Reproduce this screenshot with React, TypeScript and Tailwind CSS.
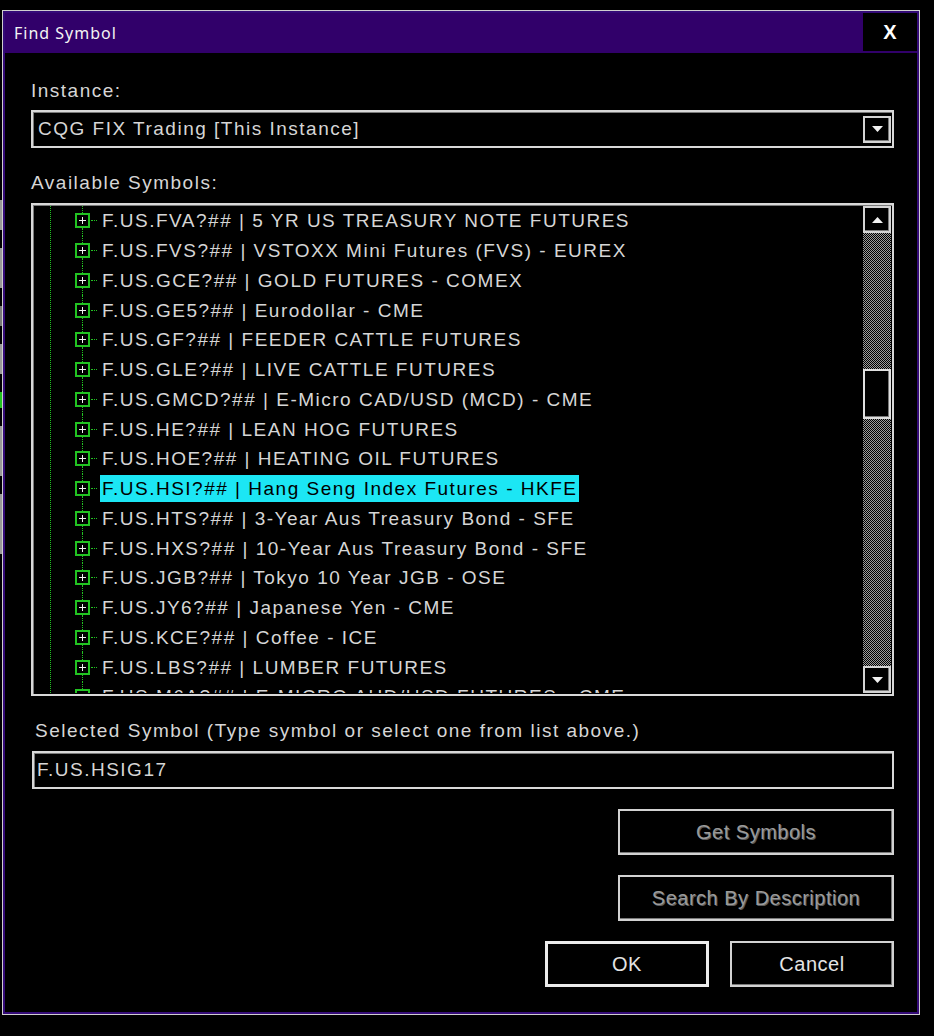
import { useState } from "react";

interface SymbolRow {
  code: string;
  desc: string;
}

const symbols: SymbolRow[] = [
  { code: "F.US.FVA?##", desc: "5 YR US TREASURY NOTE FUTURES" },
  { code: "F.US.FVS?##", desc: "VSTOXX Mini Futures (FVS) - EUREX" },
  { code: "F.US.GCE?##", desc: "GOLD FUTURES - COMEX" },
  { code: "F.US.GE5?##", desc: "Eurodollar - CME" },
  { code: "F.US.GF?##", desc: "FEEDER CATTLE FUTURES" },
  { code: "F.US.GLE?##", desc: "LIVE CATTLE FUTURES" },
  { code: "F.US.GMCD?##", desc: "E-Micro CAD/USD (MCD) - CME" },
  { code: "F.US.HE?##", desc: "LEAN HOG FUTURES" },
  { code: "F.US.HOE?##", desc: "HEATING OIL FUTURES" },
  { code: "F.US.HSI?##", desc: "Hang Seng Index Futures - HKFE" },
  { code: "F.US.HTS?##", desc: "3-Year Aus Treasury Bond - SFE" },
  { code: "F.US.HXS?##", desc: "10-Year Aus Treasury Bond - SFE" },
  { code: "F.US.JGB?##", desc: "Tokyo 10 Year JGB - OSE" },
  { code: "F.US.JY6?##", desc: "Japanese Yen - CME" },
  { code: "F.US.KCE?##", desc: "Coffee - ICE" },
  { code: "F.US.LBS?##", desc: "LUMBER FUTURES" },
  { code: "F.US.M6A?##", desc: "E-MICRO AUD/USD FUTURES - CME" },
];

const font = "font-['Liberation_Sans',Arial,sans-serif]";

const Arrow = ({ up }: { up?: boolean }) => (
  <svg width="11" height="6" viewBox="0 0 11 6">
    <polygon points={up ? "0,6 11,6 5.5,0" : "0,0 11,0 5.5,6"} fill="#f2f2f2" />
  </svg>
);

// little bevelled square used for the combo and scroll arrows
const ArrowButton = ({ up }: { up?: boolean }) => (
  <div className="w-[28px] h-[27px] shrink-0 border-2 border-[#d4d4d4] bg-black flex items-center justify-center shadow-[inset_-1px_-1px_0_#7a7a7a]">
    <Arrow up={up} />
  </div>
);

const Expander = () => (
  <div className="w-[15px] h-full flex flex-col items-center shrink-0">
    <div className="flex-1 border-l border-dotted border-[#22c322]" />
    <div className="w-[15px] h-[15px] border-2 border-[#22c322] bg-black flex items-center justify-center">
      <svg width="7" height="7" viewBox="0 0 7 7">
        <rect x="0" y="3" width="7" height="1" fill="#f0f0f0" />
        <rect x="3" y="0" width="1" height="7" fill="#f0f0f0" />
      </svg>
    </div>
    <div className="flex-1 border-l border-dotted border-[#22c322]" />
  </div>
);

const DialogButton = ({
  label,
  disabled,
  isDefault,
  className,
}: {
  label: string;
  disabled?: boolean;
  isDefault?: boolean;
  className: string;
}) => (
  <button
    className={`${className} h-[46px] bg-black flex items-center justify-center text-[20px] tracking-[0.5px] ${font} ${
      isDefault
        ? "border-[3px] border-[#ececec]"
        : "border-2 border-[#d2d2d2] shadow-[inset_-1px_-1px_0_#7a7a7a]"
    } ${
      disabled
        ? "text-[#9a9a9a] [text-shadow:1px_1px_0_#5a5a5a]"
        : "text-[#e4e4e4]"
    }`}
  >
    {label}
  </button>
);

export default function App() {
  const [selected, setSelected] = useState(9);

  return (
    <div className="w-[934px] h-[1036px] bg-black flex items-start overflow-hidden">
      {/* edge of the window behind the dialog */}
      <div className="w-[2px] h-full flex flex-col gap-[18px] pt-[200px]">
        <div className="h-[30px] bg-[#9a9a9a]" />
        <div className="h-[40px] bg-[#9a9a9a]" />
        <div className="h-[20px] bg-[#7a7a7a]" />
        <div className="h-[30px] bg-[#9a9a9a]" />
        <div className="h-[16px] bg-[#22c322]" />
        <div className="h-[50px] bg-[#9a9a9a]" />
        <div className="h-[60px] bg-[#9a9a9a]" />
      </div>

      <div className="mt-[10px] w-[918px] h-[1005px] border border-[#cfcfcf] bg-[#340b78] p-[2px] flex flex-col">
        <div className="h-[40px] bg-[#31006a] flex items-center shrink-0">
          <span
            className={`pl-[9px] flex-1 text-[16px] tracking-[1px] text-[#f4f4f4] font-['Noto_Sans','Open_Sans',sans-serif]`}
          >
            Find Symbol
          </span>
          <div className="w-[54px] h-[38px] self-start bg-black flex items-center justify-center text-white text-[20px] font-bold font-['Liberation_Sans',Arial,sans-serif]">
            X
          </div>
        </div>

        <div
          className={`flex-1 bg-black pl-[26px] pr-[23px] flex flex-col text-[19px] tracking-[1.5px] text-[#d6d6d6] ${font}`}
        >
          <div className="mt-[27px] h-[22px] leading-[22px]">Instance:</div>

          <div className="mt-[8px] h-[38px] border-2 border-[#d8d8d8] shadow-[inset_1px_1px_0_#7a7a7a] flex items-center">
            <span className="flex-1 pl-[5px]">CQG FIX Trading [This Instance]</span>
            <div className="mr-[1px]">
              <ArrowButton />
            </div>
          </div>

          <div className="mt-[24px] h-[22px] leading-[22px]">Available Symbols:</div>

          <div className="mt-[9px] h-[493px] border-2 border-[#d8d8d8] shadow-[inset_1px_1px_0_#7a7a7a] flex p-[1px] pl-[1px]">
            <div className="flex-1 overflow-hidden flex">
              <div className="ml-[16px] h-full border-l border-dotted border-[#22c322]" />
              <div className="flex-1 pl-[24px]">
                {symbols.map((s, i) => (
                  <div
                    key={s.code}
                    className="h-[29.75px] flex items-center cursor-default"
                    onClick={() => setSelected(i)}
                  >
                    <Expander />
                    <div className="w-[6px] ml-[1px] border-t border-dotted border-[#22c322]" />
                    <span
                      className={`ml-[3px] h-[27px] leading-[27px] px-[2px] whitespace-nowrap ${
                        i === selected ? "bg-[#1ce6f4] text-black" : ""
                      }`}
                    >
                      {s.code} | {s.desc}
                    </span>
                  </div>
                ))}
              </div>
            </div>

            <div className="w-[28px] flex flex-col">
              <ArrowButton up />
              <div className="h-[136px] bg-[image:repeating-conic-gradient(#9c9c9c_0%_25%,#000000_0%_50%)] bg-[length:2px_2px]" />
              <div className="h-[50px] border-2 border-[#e0e0e0] bg-black shadow-[inset_-1px_-1px_0_#7a7a7a]" />
              <div className="flex-1 bg-[image:repeating-conic-gradient(#9c9c9c_0%_25%,#000000_0%_50%)] bg-[length:2px_2px]" />
              <ArrowButton />
            </div>
          </div>

          <div className="mt-[24px] ml-[4px] h-[22px] leading-[22px]">
            Selected Symbol (Type symbol or select one from list above.)
          </div>

          <div className="mt-[9px] ml-[1px] h-[38px] border-2 border-[#d8d8d8] shadow-[inset_1px_1px_0_#7a7a7a] flex items-center pl-[3px]">
            {symbols[selected].code.replace("?##", "") + "G17"}
          </div>

          <div className="mt-[20px] flex flex-col items-end gap-[20px]">
            <DialogButton label="Get Symbols" disabled className="w-[276px]" />
            <DialogButton label="Search By Description" disabled className="w-[276px]" />
            <div className="flex gap-[21px]">
              <DialogButton label="OK" isDefault className="w-[164px]" />
              <DialogButton label="Cancel" className="w-[164px]" />
            </div>
          </div>
        </div>
      </div>
    </div>
  );
}
